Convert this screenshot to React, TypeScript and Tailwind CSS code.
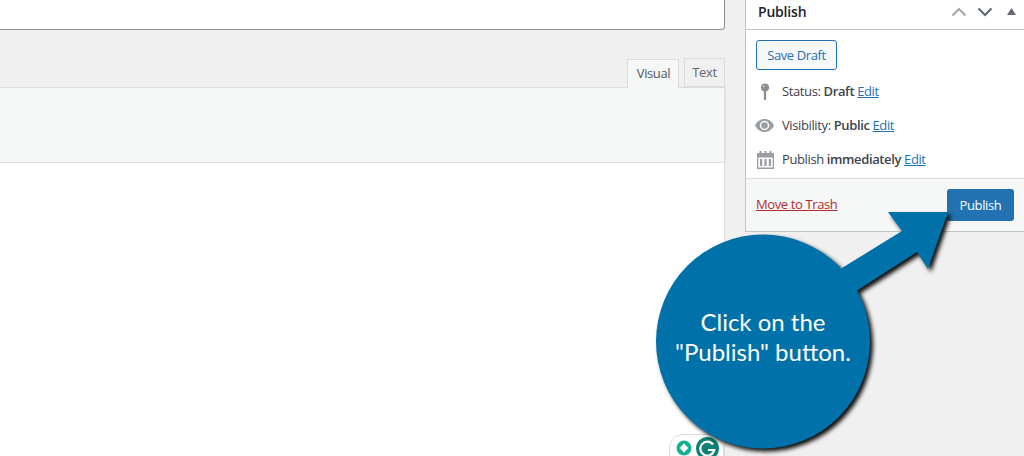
const App = () => {
  return (
    <div className="relative flex h-[456px] w-[1024px] overflow-hidden bg-[#f0f0f1] font-['Open_Sans','Noto_Sans',sans-serif] text-[13px] tracking-[-0.38px] text-[#3c434a]">
      {/* editor column */}
      <div className="flex w-[725px] flex-col">
        <div className="h-[30px] rounded-br-[4px] border-r border-b border-[#8c8f94] bg-white"></div>
        <div className="flex h-[57px] items-end justify-end">
          <div className="relative top-px flex h-[29px] w-[52px] items-center justify-center border border-b-0 border-[#dcdcde] bg-[#f6f7f7] pl-[1px] text-[#50575e]">
            Visual
          </div>
          <div className="ml-[5px] flex h-[29px] w-[41px] items-center justify-center border border-[#dcdcde] bg-[#f0f0f1] text-[#646970]">
            Text
          </div>
        </div>
        <div className="h-[76px] border-t border-r border-b border-[#dcdcde] bg-[#f6f7f7] shadow-[0_1px_2px_rgba(0,0,0,0.12)]"></div>
        <div className="flex-1 border-r border-[#dcdcde] bg-white"></div>
      </div>

      {/* publish box */}
      <div className="ml-[20px] h-[232px] w-[279px] border-b border-l border-[#c3c4c7] bg-white">
        <div className="flex h-[30px] items-center justify-between border-b border-[#c3c4c7] pr-[8px] pb-[6px] pl-[12px]">
          <span className="text-[14px] leading-none font-semibold tracking-[-0.2px] text-[#1d2327]">Publish</span>
          <div className="flex items-center gap-[10px]">
            <svg width="16" height="10" viewBox="0 0 16 10" fill="none" stroke="#a7aaad" strokeWidth="2.2">
              <path d="M1.5 8.5 8 2l6.5 6.5" />
            </svg>
            <svg width="16" height="10" viewBox="0 0 16 10" fill="none" stroke="#646970" strokeWidth="2.2">
              <path d="M1.5 1.5 8 8l6.5-6.5" />
            </svg>
            <svg className="ml-[4px]" width="9" height="7" viewBox="0 0 9 7" fill="#646970">
              <path d="M4.5 0 9 7H0z" />
            </svg>
          </div>
        </div>

        <div className="h-[148px] pt-[10px] pl-[10px]">
          <button className="flex h-[30px] w-[81px] items-center justify-center rounded-[3px] border border-[#2271b1] bg-[#f6f7f7] pt-[1px] text-[13px] text-[#2271b1]">
            Save Draft
          </button>
          <div className="mt-[10px] flex h-[22px] items-center pt-[1px]">
            <svg className="ml-[4px] w-[10px]" height="18" viewBox="0 0 11 20" fill="#8c8f94">
              <circle cx="5.5" cy="5" r="4.5" />
              <rect x="4.2" y="8" width="2.6" height="11" rx="1" />
              <circle cx="4" cy="3.6" r="1.1" fill="#c3c4c7" />
            </svg>
            <span className="ml-[12px]">
              Status: <b className="font-semibold">Draft</b>{" "}
              <a className="text-[#2271b1] underline">Edit</a>
            </span>
          </div>
          <div className="mt-[12px] flex h-[22px] items-center pt-[1px]">
            <svg className="-ml-px w-[19px]" height="13" viewBox="0 0 19 13" fill="#9a9ea3">
              <path d="M9.5 0C5.2 0 1.9 2.6 0 6.5 1.9 10.4 5.2 13 9.5 13s7.600-2.600 9.500-6.500C17.100 2.600 13.800 0 9.500 0zm0 11.200a4.700 4.700 0 1 1 0-9.400 4.700 4.700 0 0 1 0 9.400z" />
              <circle cx="9.500" cy="6.500" r="3.300" />
            </svg>
            <span className="ml-[8px]">
              Visibility: <b className="font-semibold">Public</b>{" "}
              <a className="text-[#2271b1] underline">Edit</a>
            </span>
          </div>
          <div className="mt-[12px] flex h-[22px] items-center pt-[1px]">
            <svg className="ml-px w-[17px]" height="18" viewBox="0 0 17 18" fill="#9a9ea3">
              <rect x="2.500" y="0" width="2" height="4" />
              <rect x="7.500" y="0" width="2" height="4" />
              <rect x="12.500" y="0" width="2" height="4" />
              <path d="M0 2h17v16H0zM1.300 6.500v10h14.400v-10z" fillRule="evenodd" />
              <rect x="3" y="8" width="2.200" height="7" />
              <rect x="7.400" y="8" width="2.200" height="7" />
              <rect x="11.800" y="8" width="2.200" height="7" />
            </svg>
            <span className="ml-[8px]">
              Publish <b className="font-semibold">immediately</b>{" "}
              <a className="text-[#2271b1] underline">Edit</a>
            </span>
          </div>
        </div>

        <div className="flex h-[53px] items-center justify-between border-t border-[#dcdcde] bg-[#f6f7f7] pr-[10px] pl-[10px]">
          <a className="text-[#b32d2e] underline">Move to Trash</a>
          <button className="flex h-[32px] w-[67px] items-center justify-center rounded-[3px] bg-[#2271b1] pt-[1px] text-[13px] text-white">
            Publish
          </button>
        </div>
      </div>

      {/* grammarly widget */}
      <div className="absolute top-[434px] left-[669px] flex h-[40px] w-[55px] items-start gap-[4px] rounded-[14px] border border-[#dcdcde] bg-white pt-[5px] pl-[6px]">
        <svg width="17" height="20" viewBox="0 0 17 20">
          <circle cx="8" cy="8" r="7.500" fill="#15b08f" />
          <path d="M8 3.500 12.500 8 8 12.500 3.500 8z" fill="#fff" />
          <rect x="5" y="16.500" width="6" height="2" fill="#9fdccb" />
        </svg>
        <svg className="-mt-[3px] -ml-[1px]" width="23" height="23" viewBox="0 0 23 23">
          <circle cx="11.500" cy="11.500" r="11.500" fill="#0b8073" />
          <path d="M17 7.500a7 7 0 1 0 1.200 5.500H12" fill="none" stroke="#fff" strokeWidth="2.200" />
        </svg>
      </div>

      {/* callout */}
      <svg
        className="absolute top-0 left-0 drop-shadow-[3px_3px_2px_rgba(0,0,0,0.95)]"
        width="1024"
        height="456"
        viewBox="0 0 1024 456"
      >
        <circle cx="763" cy="341.500" r="107" fill="#0071a9" />
        <path
          d="M842 268 902 231 888 212 948 212 928 269 917 252 858 290 835 300Z"
          fill="#0071a9"
        />
      </svg>
      <div className="absolute top-[307px] left-[656px] w-[214px] text-center font-['Lato','Open_Sans',sans-serif] text-[24px] leading-[30px] tracking-normal text-white">
        Click on the
        <br />
        "Publish" button.
      </div>
    </div>
  );
};

export default App;
